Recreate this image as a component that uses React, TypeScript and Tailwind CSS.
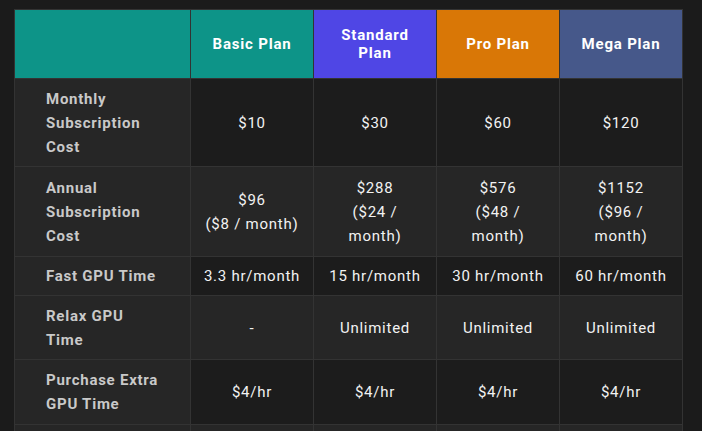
const plans = [
  { name: "Basic Plan", bg: "bg-[#0d9488]" },
  { name: "Standard Plan", bg: "bg-[#4f46e5]" },
  { name: "Pro Plan", bg: "bg-[#d97706]" },
  { name: "Mega Plan", bg: "bg-[#46588a]" },
];

const rows = [
  { label: "Monthly Subscription Cost", h: "h-[88px]", values: ["$10", "$30", "$60", "$120"] },
  {
    label: "Annual Subscription Cost",
    h: "h-[90px]",
    values: ["$96\n($8 / month)", "$288\n($24 / month)", "$576\n($48 / month)", "$1152\n($96 / month)"],
  },
  { label: "Fast GPU Time", h: "h-[39px]", values: ["3.3 hr/month", "15 hr/month", "30 hr/month", "60 hr/month"] },
  { label: "Relax GPU Time", h: "h-[64px]", values: ["-", "Unlimited", "Unlimited", "Unlimited"] },
  { label: "Purchase Extra GPU Time", h: "h-[65px]", values: ["$4/hr", "$4/hr", "$4/hr", "$4/hr"] },
  // next row only peeks in at the bottom edge
  { label: "", h: "h-[39px]", values: ["", "", "", ""] },
];

export default function App() {
  return (
    <div className="min-h-screen bg-[#1b1b1b] pl-[14px] pt-[9px] font-['Roboto',sans-serif]">
      <table className="w-[668px] table-fixed border-collapse">
        <colgroup>
          <col className="w-[176px]" />
          <col className="w-[123px]" />
          <col className="w-[123px]" />
          <col className="w-[123px]" />
          <col className="w-[123px]" />
        </colgroup>
        <thead>
          <tr className="h-[69px]">
            <th className="border border-[#333] bg-[#0d9488]"></th>
            {plans.map((p) => (
              <th
                key={p.name}
                className={`border border-[#333] px-3 text-center text-[15px] font-bold leading-[18px] tracking-[0.8px] text-white ${p.bg}`}
              >
                {p.name}
              </th>
            ))}
          </tr>
        </thead>
        <tbody>
          {rows.map((r, i) => (
            <tr key={i} className={r.h}>
              <td className="border border-[#333] bg-[#262626] pl-[31px] pr-7 text-left text-[15px] font-bold leading-[24px] tracking-[0.75px] text-[#c9c9c9]">
                {r.label}
              </td>
              {r.values.map((v, j) => (
                <td
                  key={j}
                  className={`whitespace-pre-line border border-[#333] px-3 text-center text-[15px] leading-[24px] tracking-[0.75px] text-[#f2f2f2] ${
                    i % 2 === 0 ? "bg-[#1c1c1c]" : "bg-[#262626]"
                  }`}
                >
                  {v}
                </td>
              ))}
            </tr>
          ))}
        </tbody>
      </table>
    </div>
  );
}
